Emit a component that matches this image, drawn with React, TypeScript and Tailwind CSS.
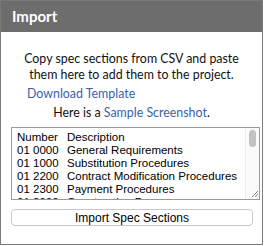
import React from "react";

const rows: [string, string][] = [
    ["Number", "Description"],
    ["01 0000", "General Requirements"],
    ["01 1000", "Substitution Procedures"],
    ["01 2200", "Contract Modification Procedures"],
    ["01 2300", "Payment Procedures"],
    ["01 2900", "Construction Progress"],
];

export default function App() {
    return (
        <div className="w-[263px] h-[245px] border border-[#7a7a7a] bg-white flex flex-col font-['Lato','Noto_Sans',sans-serif] text-[#111]">
            <div className="h-[31px] shrink-0 bg-[#6d6d6d] px-[11px] flex items-center text-white font-bold text-[15px]">
                Import
            </div>

            <div className="mt-[19px] text-center text-[12.4px] leading-[16px]">
                Copy spec sections from CSV and paste
                <br />
                them here to add them to the project.
            </div>
            <div className="mt-[3px] pl-[26px] text-[12.4px] leading-[16px] text-[#3b5fae]">
                Download Template
            </div>
            <div className="mt-[3px] text-center text-[12.4px] leading-[16px]">
                Here is a <span className="text-[#3b5fae]">Sample Screenshot</span>.
            </div>

            {/* textarea */}
            <div className="mt-[6px] ml-[10px] w-[249px] h-[73px] border border-[#9a9a9a] flex overflow-hidden font-['Liberation_Sans',Arial,sans-serif] text-[11.5px] leading-[13px] text-black">
                <div className="flex-1 pt-[3px] pl-[5px]">
                    {rows.map(([n, d]) => (
                        <div key={n} className="flex whitespace-nowrap">
                            <span className="w-[50px] shrink-0">{n}</span>
                            <span>{d}</span>
                        </div>
                    ))}
                </div>
                <div className="w-[14px] shrink-0 border-l border-[#ececec] bg-[#fafafa] flex flex-col items-center pt-[2px] pb-[1px]">
                    <div className="w-[7px] h-[17px] rounded-full bg-[#c2c2c2]" />
                    <div className="flex-1" />
                    <svg width="9" height="9" viewBox="0 0 9 9" className="self-end">
                        <path d="M8 2 L2 8 M8 5 L5 8" stroke="#8a8a8a" strokeWidth="1" />
                    </svg>
                </div>
            </div>

            <div className="mt-[9px] ml-[10px] w-[242px] h-[17px] border border-[#c8c8c8] rounded-[4px] flex items-center justify-center font-['Liberation_Sans',Arial,sans-serif] text-[12px] text-black">
                Import Spec Sections
            </div>
        </div>
    );
}
